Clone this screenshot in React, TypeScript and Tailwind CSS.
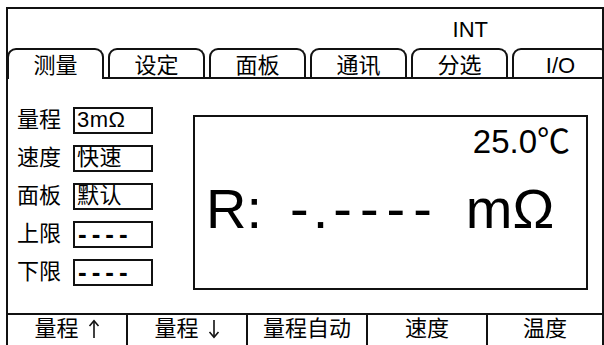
import React from "react";

const font = { fontFamily: "'Liberation Sans', 'Noto Sans CJK SC', sans-serif" };

const tabs = ["测量", "设定", "面板", "通讯", "分选", "I/O"];
const rows: [string, string][] = [
  ["量程", "3mΩ"],
  ["速度", "快速"],
  ["面板", "默认"],
  ["上限", "----"],
  ["下限", "----"],
];
const buttons: [string, string][] = [
  ["量程", "up"],
  ["量程", "down"],
  ["量程自动", ""],
  ["速度", ""],
  ["温度", ""],
];

function Arrow({ down }: { down?: boolean }) {
  return (
    <svg
      width="12"
      height="20"
      viewBox="0 0 12 20"
      className="ml-[9px]"
      style={{ transform: down ? "rotate(180deg)" : undefined }}
    >
      <path d="M6 2 V19" stroke="#111" strokeWidth="1.6" fill="none" />
      <path d="M1.5 7 L6 1.8 L10.5 7" stroke="#111" strokeWidth="1.6" fill="none" />
    </svg>
  );
}

export default function App() {
  return (
    <div
      className="w-[604px] h-[345px] bg-white overflow-hidden text-black"
      style={font}
    >
      <div className="ml-[6px] mt-[7px] w-[598px] h-[350px] border-2 border-[#111] overflow-hidden flex flex-col">
        {/* header */}
        <div className="h-[39px] flex justify-end pr-[114px] pt-[10px]">
          <span className="text-[22px] leading-none">INT</span>
        </div>
        {/* tabs */}
        <div className="h-[31px] flex items-start gap-[4px] border-b-2 border-[#111] ml-[-1px]">
          {tabs.map((t, i) => (
            <div
              key={t}
              className={
                i === 0
                  ? "relative z-10 bg-white shrink-0 w-[97px] h-[31px] border-2 border-b-0 border-[#111] rounded-t-[9px] flex items-start justify-center pt-[5px]"
                  : "shrink-0 w-[97px] h-[29px] border-2 border-b-0 border-[#111] rounded-t-[9px] flex items-start justify-center pt-[5px]"
              }
            >
              <span className="text-[22px] leading-none">{t}</span>
            </div>
          ))}
        </div>
        {/* content */}
        <div className="h-[237px] flex items-start">
          <div className="flex flex-col gap-[11px] pl-[9px] pt-[28px]">
            {rows.map(([l, v]) => (
              <div key={l} className="flex items-center gap-[12px]">
                <span className="text-[22px] leading-none">{l}</span>
                <div className="w-[80px] h-[27px] border-2 border-[#111] flex items-center pl-[2px]">
                  {v === "----" ? (
                    <span className="text-[26px] leading-none font-bold tracking-[5px] pl-[1px]">
                      ----
                    </span>
                  ) : (
                    <span className="text-[22px] leading-none tracking-[0.5px]">{v}</span>
                  )}
                </div>
              </div>
            ))}
          </div>
          <div className="ml-[40px] mt-[36px] w-[395px] h-[175px] border-2 border-[#111] flex flex-col">
            <div className="flex justify-end pr-[16px] pt-[8px]">
              <span className="text-[33px] leading-none">25.0℃</span>
            </div>
            <div className="flex items-baseline pl-[11px] mt-[23px] text-[56px] leading-none">
              <span>R:</span>
              <span className="ml-[28px] tracking-[4px]">-</span>
              <span className="tracking-[5px]">.</span>
              <span className="tracking-[8px]">----</span>
              <span className="ml-[26px]">mΩ</span>
            </div>
          </div>
        </div>
        {/* bottom bar */}
        <div className="border-t-2 border-[#111] flex">
          {buttons.map(([b, a], i) => (
            <div
              key={b + a}
              className={
                i < 4
                  ? "shrink-0 w-[120px] h-[40px] border-r-2 border-[#111] flex justify-center items-start pt-[3px]"
                  : "shrink-0 flex-1 h-[40px] flex justify-center items-start pt-[3px]"
              }
            >
              <span className="text-[22px] leading-none">{b}</span>
              {a && (
                <div className="pt-[1px]">
                  <Arrow down={a === "down"} />
                </div>
              )}
            </div>
          ))}
        </div>
      </div>
    </div>
  );
}
